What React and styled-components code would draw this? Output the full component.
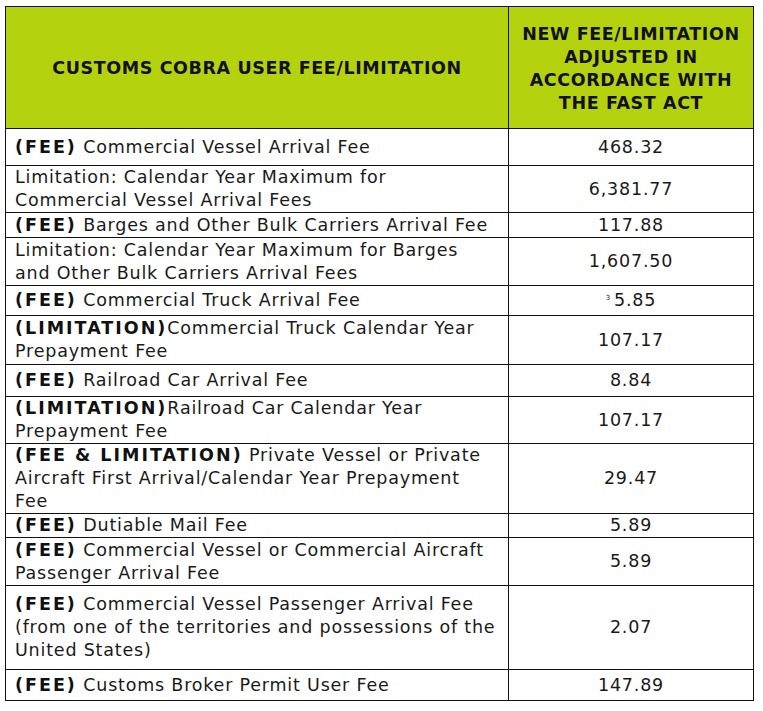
import React from "react";
import styled, { createGlobalStyle } from "styled-components";

const Global = createGlobalStyle`
  html, body { margin: 0; padding: 0; background: #ffffff; }
  body { font-family: "DejaVu Sans", "Liberation Sans", sans-serif; color: #1a1a1a; }
`;

const Page = styled.div`
  padding: 6px 0 0 5px;
`;

const Table = styled.table`
  border-collapse: collapse;
  width: 748px;
  table-layout: fixed;
  font-size: 17.5px;
  line-height: 23px;
  letter-spacing: 0.8px;
`;

const Col = styled.col`
  width: ${(p) => p.$w}px;
`;

const HeadCell = styled.th`
  background: #b5d20f;
  border: 1px solid #111;
  height: 119px;
  padding: 2px 4px 0;
  font-weight: bold;
  font-size: 17.5px;
  line-height: 23px;
  letter-spacing: 0.6px;
  color: #111;
  text-align: center;
  vertical-align: middle;
`;

const Row = styled.tr`
  height: ${(p) => p.$h}px;
`;

const Cell = styled.td`
  border: 1px solid #111;
  padding: 0 9px;
  vertical-align: middle;
  white-space: nowrap;
  overflow: hidden;
`;

const ValueCell = styled(Cell)`
  text-align: center;
  padding: 0;
`;

const Tag = styled.b`
  font-weight: bold;
  letter-spacing: 2px;
  color: #111;
`;

const Sup = styled.sup`
  font-size: 7px;
  vertical-align: 6px;
  margin-right: 3px;
  line-height: 0;
`;

const rows = [
  { h: 37, tag: "(FEE)", lines: ["Commercial Vessel Arrival Fee"], v: "468.32" },
  { h: 46, lines: ["Limitation: Calendar Year Maximum for", "Commercial Vessel Arrival Fees"], v: "6,381.77" },
  { h: 25, tag: "(FEE)", lines: ["Barges and Other Bulk Carriers Arrival Fee"], v: "117.88" },
  { h: 48, lines: ["Limitation: Calendar Year Maximum for Barges", "and Other Bulk Carriers Arrival Fees"], v: "1,607.50" },
  { h: 30, tag: "(FEE)", lines: ["Commercial Truck Arrival Fee"], v: "5.85", sup: "3" },
  { h: 49, tag: "(LIMITATION)", tight: true, lines: ["Commercial Truck Calendar Year", "Prepayment Fee"], v: "107.17" },
  { h: 32, tag: "(FEE)", lines: ["Railroad Car Arrival Fee"], v: "8.84" },
  { h: 47, tag: "(LIMITATION)", tight: true, lines: ["Railroad Car Calendar Year", "Prepayment Fee"], v: "107.17" },
  { h: 70, tag: "(FEE & LIMITATION)", lines: ["Private Vessel or Private", "Aircraft First Arrival/Calendar Year Prepayment", "Fee"], v: "29.47" },
  { h: 24, tag: "(FEE)", lines: ["Dutiable Mail Fee"], v: "5.89" },
  { h: 48, tag: "(FEE)", lines: ["Commercial Vessel or Commercial Aircraft", "Passenger Arrival Fee"], v: "5.89" },
  { h: 84, tag: "(FEE)", lines: ["Commercial Vessel Passenger Arrival Fee", "(from one of the territories and possessions of the", "United States)"], v: "2.07" },
  { h: 31, tag: "(FEE)", lines: ["Customs Broker Permit User Fee"], v: "147.89" },
];

export default function App() {
  return (
    <>
      <Global />
      <Page>
        <Table>
          <colgroup>
            <Col $w={503} />
            <Col $w={245} />
          </colgroup>
          <thead>
            <tr>
              <HeadCell>CUSTOMS COBRA USER FEE/LIMITATION</HeadCell>
              <HeadCell>
                NEW FEE/LIMITATION
                <br />
                ADJUSTED IN
                <br />
                ACCORDANCE WITH
                <br />
                THE FAST ACT
              </HeadCell>
            </tr>
          </thead>
          <tbody>
            {rows.map((r, i) => (
              <Row key={i} $h={r.h}>
                <Cell>
                  {r.lines.map((l, j) => (
                    <React.Fragment key={j}>
                      {j === 0 && r.tag ? (
                        <>
                          <Tag>{r.tag}</Tag>
                          {r.tight ? "" : " "}
                        </>
                      ) : null}
                      {l}
                      {j < r.lines.length - 1 ? <br /> : null}
                    </React.Fragment>
                  ))}
                </Cell>
                <ValueCell>
                  {r.sup ? <Sup>{r.sup}</Sup> : null}
                  {r.v}
                </ValueCell>
              </Row>
            ))}
          </tbody>
        </Table>
      </Page>
    </>
  );
}
